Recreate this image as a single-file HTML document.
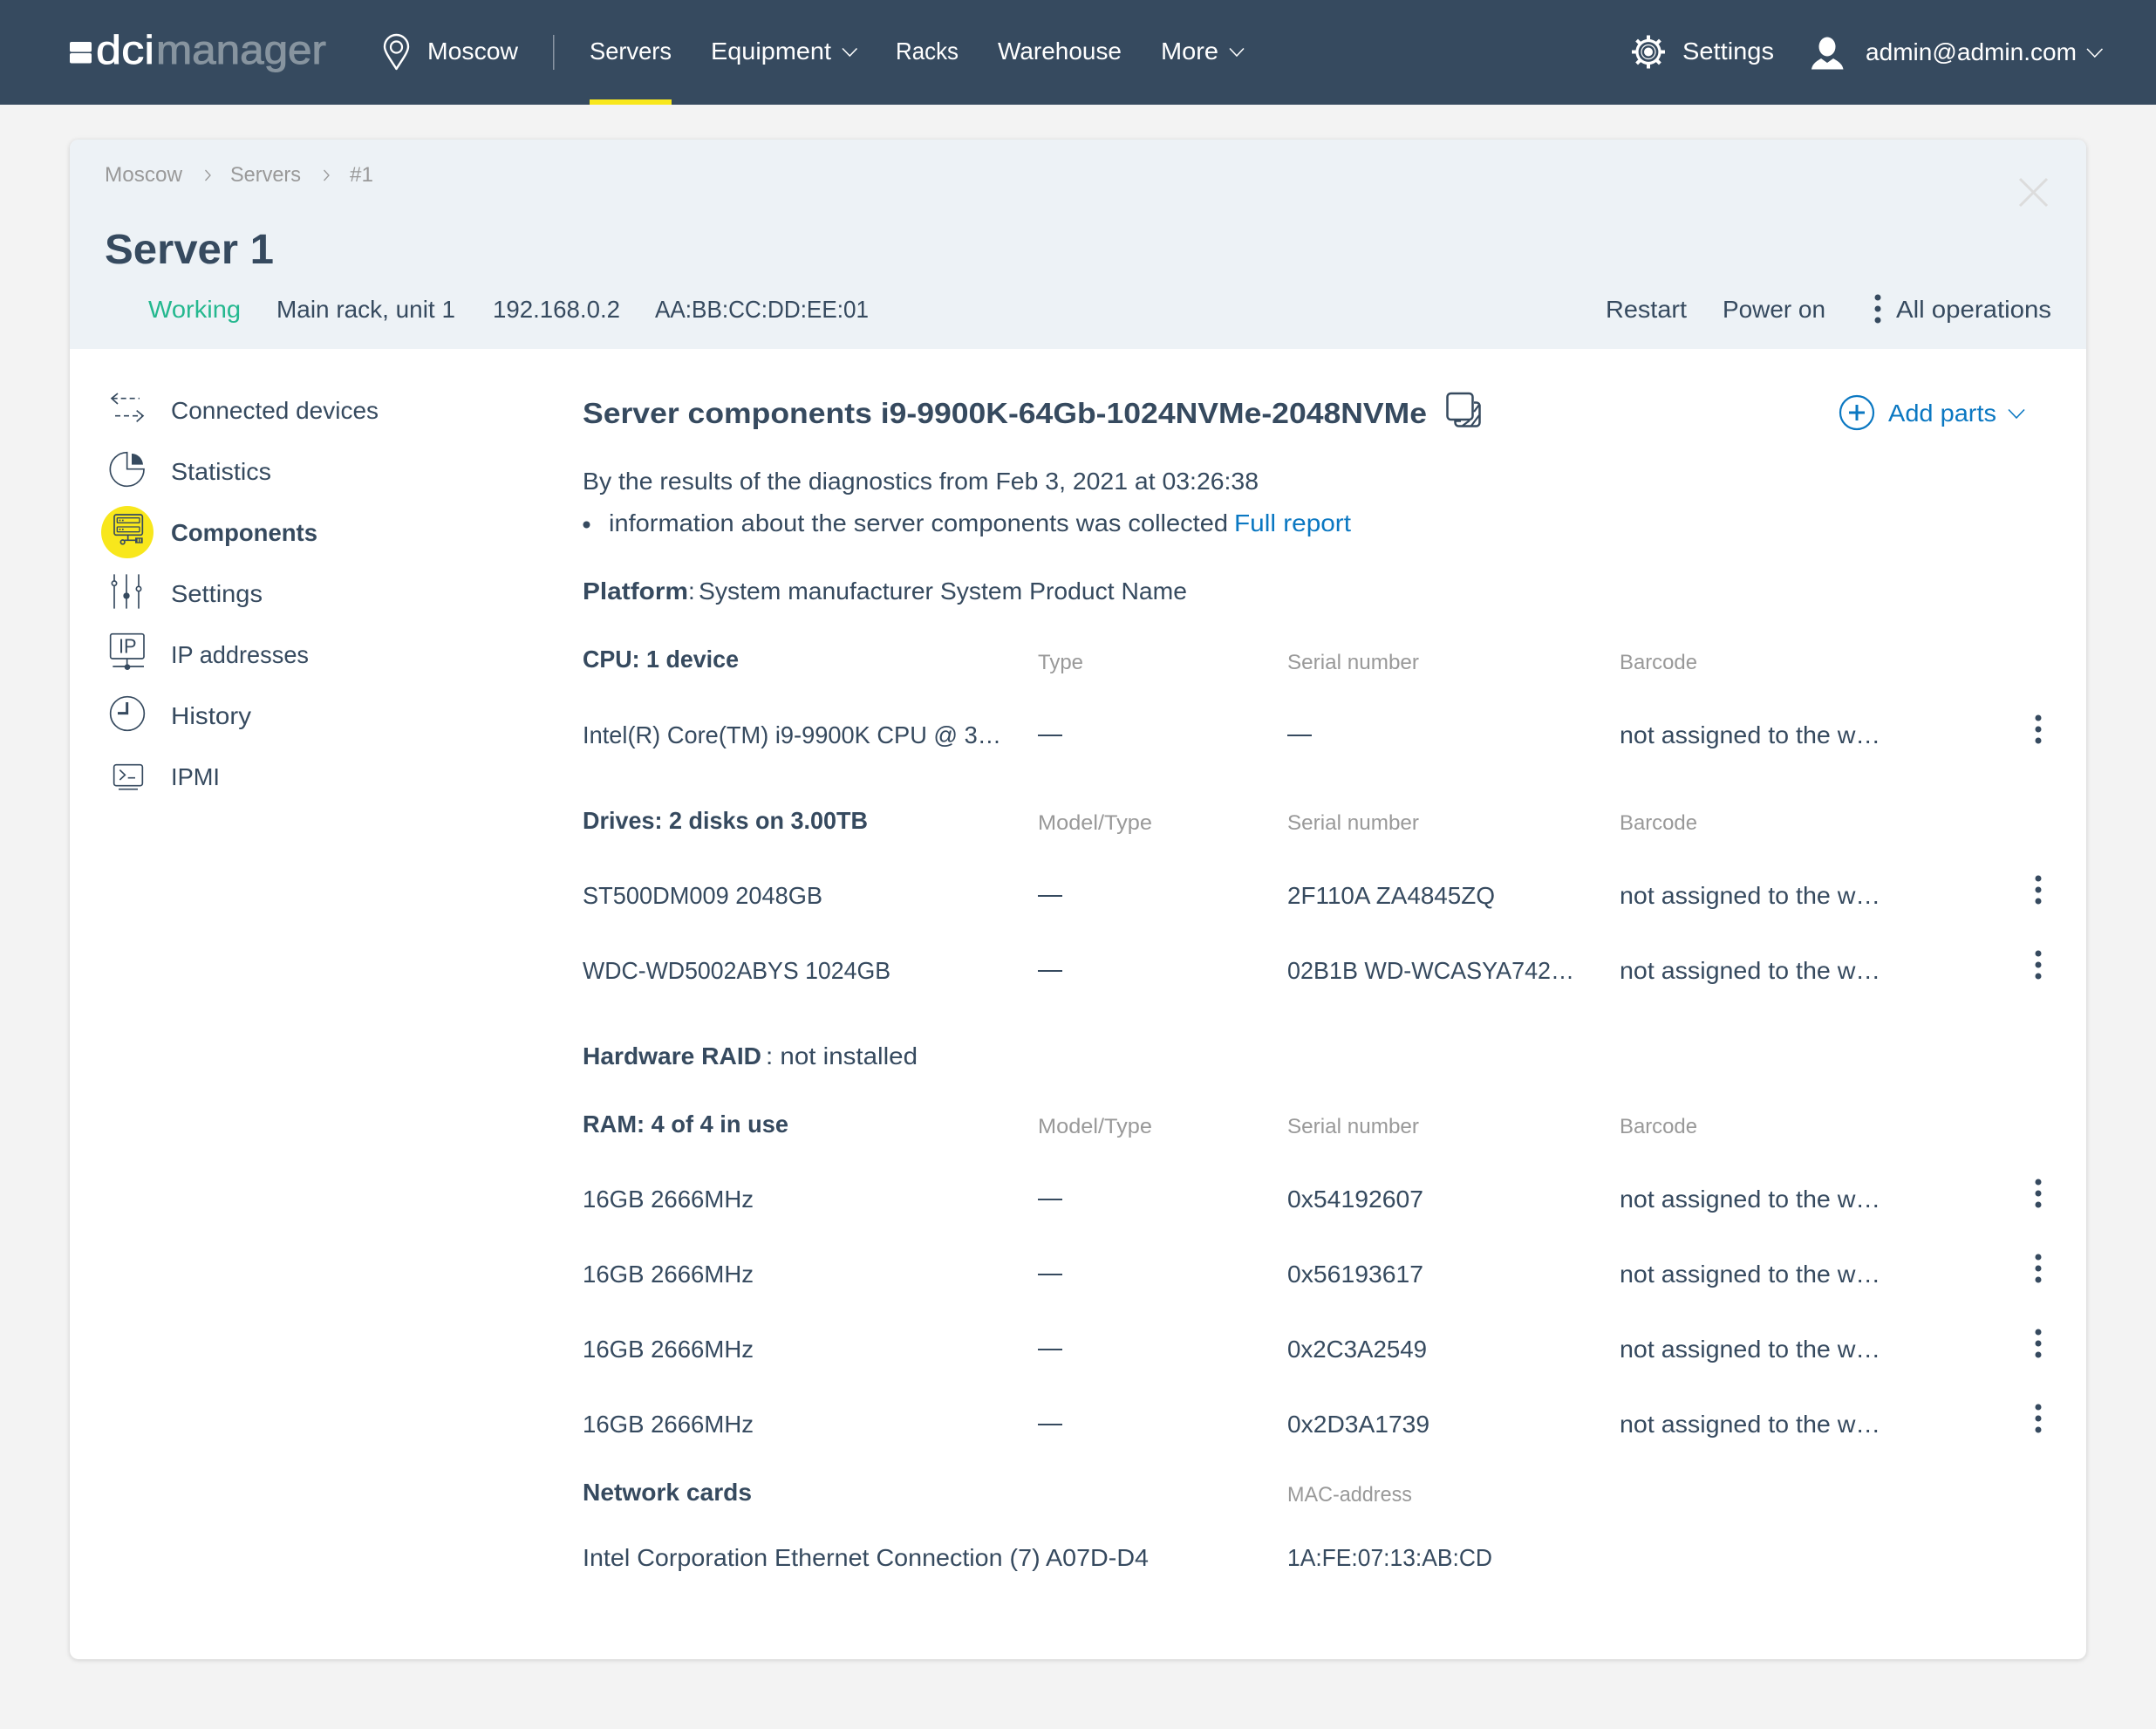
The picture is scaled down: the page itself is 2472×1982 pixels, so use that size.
<!DOCTYPE html>
<html lang="en"><head><meta charset="utf-8"><title>Server 1</title>
<style>
html,body{margin:0;padding:0;width:2472px;height:1982px;overflow:hidden;background:#f3f3f3}
#card{position:absolute;left:80px;top:160px;width:2312px;height:1742px;background:#fff;border-radius:10px;box-shadow:0 1px 6px rgba(0,0,0,.16)}
svg{position:absolute;left:0;top:0}
text{font-family:"Liberation Sans",sans-serif;font-size:28px;fill:#364a5f}
.w{fill:#fff}.b{font-weight:700}.g{fill:#999;font-size:24px}.l{fill:#0b78c2}
.i{fill:none;stroke:#364a5f;stroke-width:5}
</style></head><body>
<div id="card"></div>
<svg width="2472" height="1982" viewBox="0 0 2472 1982" xmlns="http://www.w3.org/2000/svg">
<defs><style>text{white-space:pre}</style></defs>
<!-- top bar -->
<rect width="2472" height="120" fill="#364a5f"/>
<rect x="676" y="114" width="94" height="6" fill="#f8e71c"/>
<rect x="80" y="48" width="25" height="11.5" rx="2" fill="#fff"/>
<rect x="80" y="61" width="25" height="11.5" rx="2" fill="#fff"/>
<text class="w" x="110" y="73" style="font-size:46px;stroke:#fff;stroke-width:.7" textLength="67" lengthAdjust="spacingAndGlyphs">dci</text>
<text x="179" y="73" style="font-size:46px;fill:#87949f;stroke:#87949f;stroke-width:.9" textLength="195" lengthAdjust="spacingAndGlyphs">manager</text>
<path d="M454.5 79C449 70 441 60 441 53.500A13.500 13.500 0 0 1 468 53.500C468 60 460 70 454.500 79Z" fill="none" stroke="#fff" stroke-width="2.400" stroke-linejoin="round"/>
<circle cx="454.500" cy="54" r="6.500" fill="none" stroke="#fff" stroke-width="2.200"/>
<text class="w" x="490" y="68" textLength="104" lengthAdjust="spacingAndGlyphs">Moscow</text>
<rect x="634" y="40" width="1.500" height="40" fill="#8995a3"/>
<text class="w" x="676" y="68" textLength="94" lengthAdjust="spacingAndGlyphs">Servers</text>
<text class="w" x="815" y="68" textLength="138" lengthAdjust="spacingAndGlyphs">Equipment</text>
<path d="M966 55.500L974.300 64L982.500 55.500" fill="none" stroke="#fff" stroke-width="1.500"/>
<text class="w" x="1027" y="68" textLength="72" lengthAdjust="spacingAndGlyphs">Racks</text>
<text class="w" x="1144" y="68" textLength="142" lengthAdjust="spacingAndGlyphs">Warehouse</text>
<text class="w" x="1331" y="68" textLength="66" lengthAdjust="spacingAndGlyphs">More</text>
<path d="M1410 55.500L1418 64L1426 55.500" fill="none" stroke="#fff" stroke-width="1.500"/>
<!-- gear -->
<g fill="none" stroke="#fff" transform="translate(1890 59.500)">
<circle r="13" stroke-width="3.200"/><circle r="8" stroke-width="1.200"/><circle r="5" fill="#fff" stroke="none"/>
<g stroke-width="4"><path d="M0-13V-19"/><path d="M0 13V19"/><path d="M-13 0H-19"/><path d="M13 0H19"/><path d="M9.200-9.200L13.400-13.400"/><path d="M-9.200-9.200L-13.400-13.400"/><path d="M9.200 9.200L13.400 13.400"/><path d="M-9.200 9.200L-13.400 13.400"/></g>
</g>
<text class="w" x="1929" y="68" textLength="105" lengthAdjust="spacingAndGlyphs">Settings</text>
<ellipse cx="2095" cy="53.500" rx="9.500" ry="11" fill="#fff"/>
<path d="M2077 79.500C2078 74 2081 71 2088 67L2095 72L2102 67C2109 71 2112.500 74 2113.500 79.500Z" fill="#fff"/>
<text class="w" x="2139" y="69" textLength="242" lengthAdjust="spacingAndGlyphs">admin@admin.com</text>
<path d="M2393 56L2401.800 65L2410.500 56" fill="none" stroke="#fff" stroke-width="1.500"/>
<!-- card head -->
<path d="M80 400V170A10 10 0 0 1 90 160H2382A10 10 0 0 1 2392 170V400Z" fill="#edf2f6"/>
<text class="g" x="120" y="208" textLength="89" lengthAdjust="spacingAndGlyphs">Moscow</text>
<path d="M235.500 195L241 201L235.500 207" fill="none" stroke="#999" stroke-width="1.300"/>
<text class="g" x="264" y="208" textLength="81" lengthAdjust="spacingAndGlyphs">Servers</text>
<path d="M371.500 195L377 201L371.500 207" fill="none" stroke="#999" stroke-width="1.300"/>
<text class="g" x="401" y="208" textLength="27" lengthAdjust="spacingAndGlyphs">#1</text>
<text class="b" x="120" y="302" style="font-size:48px" textLength="194" lengthAdjust="spacingAndGlyphs">Server 1</text>
<text x="170" y="364" style="fill:#25b88f" textLength="106" lengthAdjust="spacingAndGlyphs">Working</text>
<text x="317" y="364" textLength="205" lengthAdjust="spacingAndGlyphs">Main rack, unit 1</text>
<text x="565" y="364" textLength="146" lengthAdjust="spacingAndGlyphs">192.168.0.2</text>
<text x="751" y="364" textLength="245" lengthAdjust="spacingAndGlyphs">AA:BB:CC:DD:EE:01</text>
<text x="1841" y="364" textLength="93" lengthAdjust="spacingAndGlyphs">Restart</text>
<text x="1975" y="364" textLength="118" lengthAdjust="spacingAndGlyphs">Power on</text>
<g fill="#364a5f"><circle cx="2153" cy="341" r="3.500"/><circle cx="2153" cy="354" r="3.500"/><circle cx="2153" cy="367" r="3.500"/></g>
<text x="2174" y="364" textLength="178" lengthAdjust="spacingAndGlyphs">All operations</text>
<path d="M2316 205L2347 236M2347 205L2316 236" fill="none" stroke="#dcdcdc" stroke-width="3"/>
<!-- sidebar text -->
<text x="196" y="480" textLength="238" lengthAdjust="spacingAndGlyphs">Connected devices</text>
<text x="196" y="550" textLength="115" lengthAdjust="spacingAndGlyphs">Statistics</text>
<text class="b" x="196" y="620" textLength="168" lengthAdjust="spacingAndGlyphs">Components</text>
<text x="196" y="690" textLength="105" lengthAdjust="spacingAndGlyphs">Settings</text>
<text x="196" y="760" textLength="158" lengthAdjust="spacingAndGlyphs">IP addresses</text>
<text x="196" y="830" textLength="92" lengthAdjust="spacingAndGlyphs">History</text>
<text x="196" y="900" textLength="56" lengthAdjust="spacingAndGlyphs">IPMI</text>
<!-- sidebar icons: drawn in 3x coordinates -->
<g transform="translate(100 430) scale(.33333)">
<circle cx="138" cy="540" r="90" fill="#f8e71c"/>
<g class="i">
<path d="M105 63L84 80L105 99"/><path d="M86 80H180" stroke-dasharray="18 12"/>
<path d="M96 140H190" stroke-dasharray="18 12"/><path d="M170 122L192 140L170 160"/>
<path d="M137 266A58 58 0 1 0 195 323H137Z"/>
<rect x="93" y="480" width="97" height="70" rx="7"/>
<rect x="103" y="491" width="77" height="17" rx="2" stroke-width="4"/><rect x="103" y="522" width="77" height="17" rx="2" stroke-width="4"/>
<path d="M140 550V568M128 568H166"/><circle cx="122" cy="574" r="7"/>
<path d="M93 685V803M135 685V803M177 685V803"/>
<circle cx="93" cy="716" r="8" fill="#fff"/><circle cx="177" cy="735" r="8" fill="#fff"/>
<rect x="80" y="890" width="115" height="85" rx="7"/>
<path d="M137 975V1000M88 1002H195"/>
<circle cx="138" cy="1164" r="58"/>
<path d="M137 1125V1163H105" stroke-width="9"/>
<rect x="92" y="1340" width="98" height="72" rx="8"/>
<path d="M112 1358L130 1375L112 1392M140 1385H165M108 1424H174"/>
</g>
<g fill="#364a5f">
<path d="M153 270A40 40 0 0 1 192 308H153Z"/>
<rect x="110" y="497" width="5" height="5"/><rect x="120" y="497" width="5" height="5"/>
<rect x="110" y="528" width="5" height="5"/><rect x="120" y="528" width="5" height="5"/>
<rect x="165" y="559" width="26" height="19"/>
<circle cx="135" cy="759" r="11"/>
<circle cx="138" cy="1004" r="10"/>
</g>
<rect x="173" y="563" width="4" height="11" fill="#f8e71c"/><rect x="181" y="563" width="4" height="11" fill="#f8e71c"/>
<text x="108" y="956" style="font-size:68px" textLength="62" lengthAdjust="spacingAndGlyphs">IP</text>
</g>
<!-- main heading -->
<text class="b" x="668" y="485" style="font-size:33px" textLength="968" lengthAdjust="spacingAndGlyphs">Server components i9-9900K-64Gb-1024NVMe-2048NVMe</text>
<path d="M1675 482.500H1668.500V484.500A4 4 0 0 0 1672.500 488.500H1692.500A4 4 0 0 0 1696.500 484.500V464.500A4 4 0 0 0 1692.500 461.500H1690" fill="none" stroke="#364a5f" stroke-width="2.500"/>
<path d="M1677 488L1685 482M1687 488L1696 476M1690 472L1696 464" fill="none" stroke="#364a5f" stroke-width="2.200"/>
<rect x="1659.500" y="451" width="29" height="30" rx="4" fill="#fff" stroke="#364a5f" stroke-width="2.500"/>
<circle cx="2129" cy="473" r="19" fill="none" stroke="#0b78c2" stroke-width="2.200"/>
<path d="M2129 464V482M2120 473H2138" fill="none" stroke="#0b78c2" stroke-width="3"/>
<text class="l" x="2165" y="483" textLength="124" lengthAdjust="spacingAndGlyphs">Add parts</text>
<path d="M2303 469.500L2312 479L2321 469.500" fill="none" stroke="#0b78c2" stroke-width="1.600"/>
<text x="668" y="561" textLength="775" lengthAdjust="spacingAndGlyphs">By the results of the diagnostics from Feb 3, 2021 at 03:26:38</text>
<circle cx="672.500" cy="601.500" r="4" fill="#364a5f"/>
<text x="698" y="609" textLength="710" lengthAdjust="spacingAndGlyphs">information about the server components was collected</text>
<text class="l" x="1415" y="609" textLength="134" lengthAdjust="spacingAndGlyphs">Full report</text>
<text class="b" x="668" y="687" textLength="121" lengthAdjust="spacingAndGlyphs">Platform</text>
<text x="789" y="687">:</text>
<text x="801" y="687" textLength="560" lengthAdjust="spacingAndGlyphs">System manufacturer System Product Name</text>
<!-- CPU -->
<text class="b" x="668" y="765" textLength="179" lengthAdjust="spacingAndGlyphs">CPU: 1 device</text>
<text class="g" x="1190" y="767" textLength="52" lengthAdjust="spacingAndGlyphs">Type</text>
<text class="g" x="1476" y="767" textLength="151" lengthAdjust="spacingAndGlyphs">Serial number</text>
<text class="g" x="1857" y="767" textLength="89" lengthAdjust="spacingAndGlyphs">Barcode</text>
<text x="668" y="852" textLength="480" lengthAdjust="spacingAndGlyphs">Intel(R) Core(TM) i9-9900K CPU @ 3…</text>
<rect x="1190" y="842" width="28" height="2" fill="#364a5f"/>
<rect x="1476" y="842" width="28" height="2" fill="#364a5f"/>
<text x="1857" y="852" textLength="299" lengthAdjust="spacingAndGlyphs">not assigned to the w…</text>
<g fill="#364a5f"><circle cx="2337" cy="823" r="3.500"/><circle cx="2337" cy="836" r="3.500"/><circle cx="2337" cy="849" r="3.500"/></g>
<!-- Drives -->
<text class="b" x="668" y="950" textLength="327" lengthAdjust="spacingAndGlyphs">Drives: 2 disks on 3.00TB</text>
<text class="g" x="1190" y="951" textLength="131" lengthAdjust="spacingAndGlyphs">Model/Type</text>
<text class="g" x="1476" y="951" textLength="151" lengthAdjust="spacingAndGlyphs">Serial number</text>
<text class="g" x="1857" y="951" textLength="89" lengthAdjust="spacingAndGlyphs">Barcode</text>
<text x="668" y="1036" textLength="275" lengthAdjust="spacingAndGlyphs">ST500DM009 2048GB</text>
<rect x="1190" y="1026" width="28" height="2" fill="#364a5f"/>
<text x="1476" y="1036" textLength="238" lengthAdjust="spacingAndGlyphs">2F110A ZA4845ZQ</text>
<text x="1857" y="1036" textLength="299" lengthAdjust="spacingAndGlyphs">not assigned to the w…</text>
<g fill="#364a5f"><circle cx="2337" cy="1007" r="3.500"/><circle cx="2337" cy="1020" r="3.500"/><circle cx="2337" cy="1033" r="3.500"/></g>
<text x="668" y="1122" textLength="353" lengthAdjust="spacingAndGlyphs">WDC-WD5002ABYS 1024GB</text>
<rect x="1190" y="1112" width="28" height="2" fill="#364a5f"/>
<text x="1476" y="1122" textLength="329" lengthAdjust="spacingAndGlyphs">02B1B WD-WCASYA742…</text>
<text x="1857" y="1122" textLength="299" lengthAdjust="spacingAndGlyphs">not assigned to the w…</text>
<g fill="#364a5f"><circle cx="2337" cy="1093" r="3.500"/><circle cx="2337" cy="1106" r="3.500"/><circle cx="2337" cy="1119" r="3.500"/></g>
<!-- RAID -->
<text class="b" x="668" y="1220" textLength="205" lengthAdjust="spacingAndGlyphs">Hardware RAID</text>
<text x="878" y="1220" textLength="174" lengthAdjust="spacingAndGlyphs">: not installed</text>
<!-- RAM -->
<text class="b" x="668" y="1298" textLength="236" lengthAdjust="spacingAndGlyphs">RAM: 4 of 4 in use</text>
<text class="g" x="1190" y="1299" textLength="131" lengthAdjust="spacingAndGlyphs">Model/Type</text>
<text class="g" x="1476" y="1299" textLength="151" lengthAdjust="spacingAndGlyphs">Serial number</text>
<text class="g" x="1857" y="1299" textLength="89" lengthAdjust="spacingAndGlyphs">Barcode</text>
<text x="668" y="1384" textLength="196" lengthAdjust="spacingAndGlyphs">16GB 2666MHz</text>
<rect x="1190" y="1374" width="28" height="2" fill="#364a5f"/>
<text x="1476" y="1384" textLength="156" lengthAdjust="spacingAndGlyphs">0x54192607</text>
<text x="1857" y="1384" textLength="299" lengthAdjust="spacingAndGlyphs">not assigned to the w…</text>
<g fill="#364a5f"><circle cx="2337" cy="1355" r="3.500"/><circle cx="2337" cy="1368" r="3.500"/><circle cx="2337" cy="1381" r="3.500"/></g>
<text x="668" y="1470" textLength="196" lengthAdjust="spacingAndGlyphs">16GB 2666MHz</text>
<rect x="1190" y="1460" width="28" height="2" fill="#364a5f"/>
<text x="1476" y="1470" textLength="156" lengthAdjust="spacingAndGlyphs">0x56193617</text>
<text x="1857" y="1470" textLength="299" lengthAdjust="spacingAndGlyphs">not assigned to the w…</text>
<g fill="#364a5f"><circle cx="2337" cy="1441" r="3.500"/><circle cx="2337" cy="1454" r="3.500"/><circle cx="2337" cy="1467" r="3.500"/></g>
<text x="668" y="1556" textLength="196" lengthAdjust="spacingAndGlyphs">16GB 2666MHz</text>
<rect x="1190" y="1546" width="28" height="2" fill="#364a5f"/>
<text x="1476" y="1556" textLength="160" lengthAdjust="spacingAndGlyphs">0x2C3A2549</text>
<text x="1857" y="1556" textLength="299" lengthAdjust="spacingAndGlyphs">not assigned to the w…</text>
<g fill="#364a5f"><circle cx="2337" cy="1527" r="3.500"/><circle cx="2337" cy="1540" r="3.500"/><circle cx="2337" cy="1553" r="3.500"/></g>
<text x="668" y="1642" textLength="196" lengthAdjust="spacingAndGlyphs">16GB 2666MHz</text>
<rect x="1190" y="1632" width="28" height="2" fill="#364a5f"/>
<text x="1476" y="1642" textLength="163" lengthAdjust="spacingAndGlyphs">0x2D3A1739</text>
<text x="1857" y="1642" textLength="299" lengthAdjust="spacingAndGlyphs">not assigned to the w…</text>
<g fill="#364a5f"><circle cx="2337" cy="1613" r="3.500"/><circle cx="2337" cy="1626" r="3.500"/><circle cx="2337" cy="1639" r="3.500"/></g>
<!-- Network -->
<text class="b" x="668" y="1720" textLength="194" lengthAdjust="spacingAndGlyphs">Network cards</text>
<text class="g" x="1476" y="1721" textLength="143" lengthAdjust="spacingAndGlyphs">MAC-address</text>
<text x="668" y="1795" textLength="649" lengthAdjust="spacingAndGlyphs">Intel Corporation Ethernet Connection (7) A07D-D4</text>
<text x="1476" y="1795" textLength="235" lengthAdjust="spacingAndGlyphs">1A:FE:07:13:AB:CD</text>
</svg>
</body></html>
